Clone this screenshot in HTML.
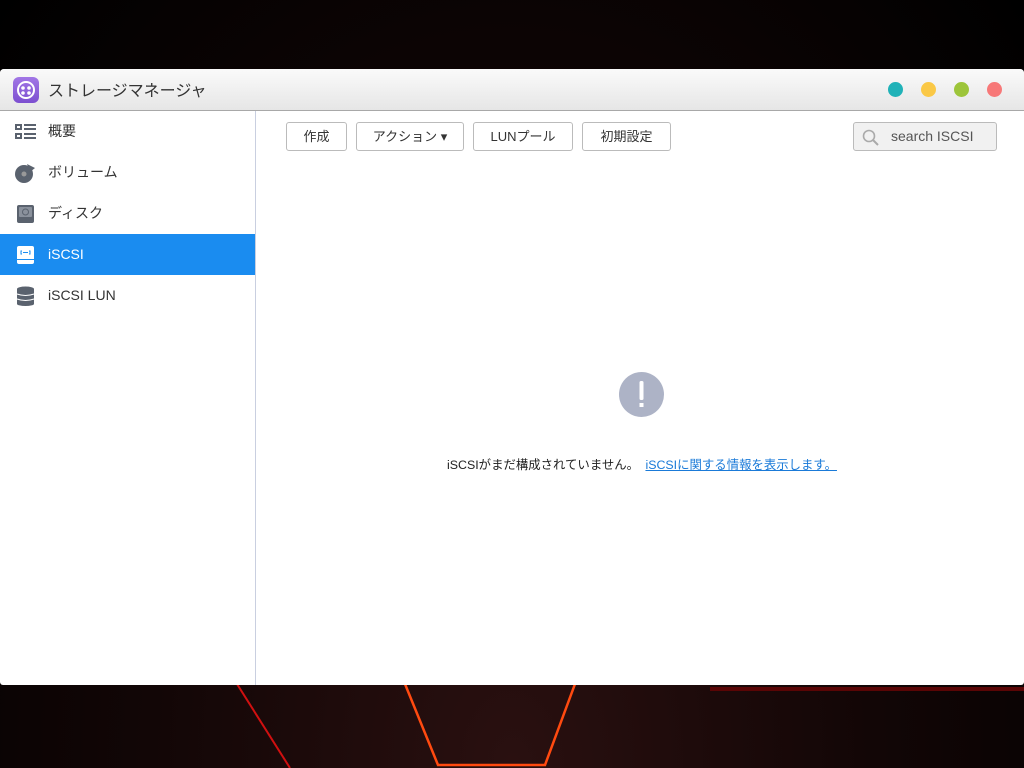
<!DOCTYPE html>
<html><head><meta charset="utf-8"><style>
*{margin:0;padding:0;box-sizing:border-box}
body{width:1024px;height:768px;overflow:hidden;background:radial-gradient(ellipse at 50% 100%,#2a1010 0%,#120606 50%,#000 100%);font-family:"Liberation Sans","Noto Sans CJK JP",sans-serif;position:relative}
.win{position:absolute;left:0;top:69px;width:1024px;height:616px;background:#fff;border-radius:4px 4px 3px 3px;overflow:hidden}
.title{height:42px;background:linear-gradient(#fafafa,#e6e6e6);border-bottom:1px solid #a8a8a8;position:relative}
.title .t{position:absolute;left:48px;top:8px;font-size:16px;color:#333}
.logo{position:absolute;left:13px;top:8px;width:26px;height:26px;border-radius:6px;background:linear-gradient(#a277e6,#7c4fd0)}
.dot{position:absolute;top:13px;width:15px;height:15px;border-radius:50%}
.side{position:absolute;left:0;top:42px;width:256px;bottom:0;border-right:1px solid #c9cfe0}
.item{height:41px;position:relative;font-size:14px;color:#333;line-height:41px;padding-left:48px}
.item.sel{background:#1a8cf0;color:#fff}
.ic{position:absolute;left:15px;top:11px;width:21px;height:20px}
.btn{position:absolute;top:122px;height:29px;border:1px solid #bbb;border-radius:3px;background:#fff;font-size:13px;color:#333;text-align:center;line-height:27px}
.search{position:absolute;left:853px;top:122px;width:144px;height:29px;border:1px solid #bbb;border-radius:3px;background:#f1f1f1;font-size:14px;color:#555;line-height:27px;padding-left:37px}
</style></head><body>
<svg style="position:absolute;left:0;top:684px" width="1024" height="84">
<line x1="237" y1="0" x2="290" y2="84" stroke="#d01010" stroke-width="2"/>
<polyline points="405,0 438,81 545,81 575,0" fill="none" stroke="#ff4a10" stroke-width="2.5"/>
<rect x="710" y="3" width="314" height="4" fill="#5a0505"/>
</svg>
<div class="win">
<div class="title">
<div class="logo"><svg width="26" height="26"><circle cx="13" cy="13" r="8" fill="none" stroke="#fff" stroke-width="2"/><circle cx="10" cy="11" r="1.8" fill="#fff"/><circle cx="16" cy="11" r="1.8" fill="#fff"/><circle cx="10" cy="16" r="1.8" fill="#fff"/><circle cx="16" cy="16" r="1.8" fill="#fff"/></svg></div>
<div class="t">ストレージマネージャ</div>
<div class="dot" style="left:888px;background:#20b2b8"></div>
<div class="dot" style="left:921px;background:#fac846"></div>
<div class="dot" style="left:954px;background:#9dc53a"></div>
<div class="dot" style="left:987px;background:#f77878"></div>
</div>
<div class="side">
<div class="item"><svg class="ic" viewBox="0 0 21 20"><rect x="0" y="2" width="7" height="6" fill="#5a626e"/><rect x="2" y="4" width="3" height="2" fill="#fff"/><rect x="0" y="11" width="7" height="6" fill="#5a626e"/><rect x="2" y="13" width="3" height="2" fill="#fff"/><rect x="9" y="2" width="12" height="2" fill="#5a626e"/><rect x="9" y="6" width="12" height="2" fill="#5a626e"/><rect x="9" y="11" width="12" height="2" fill="#5a626e"/><rect x="9" y="15" width="12" height="2" fill="#5a626e"/></svg>概要</div>
<div class="item"><svg class="ic" viewBox="0 0 21 20"><circle cx="9" cy="11" r="9" fill="#5a626e"/><circle cx="9" cy="11" r="2.5" fill="#999"/><path d="M12 1 L20 5 L15 9 Z" fill="#5a626e"/></svg>ボリューム</div>
<div class="item"><svg class="ic" viewBox="0 0 21 20"><rect x="2" y="1" width="17" height="18" rx="2" fill="#5a626e"/><rect x="4" y="3" width="13" height="10" rx="1" fill="#8a919c"/><circle cx="10.5" cy="8" r="3" fill="none" stroke="#5a626e" stroke-width="1"/></svg>ディスク</div>
<div class="item sel"><svg class="ic" viewBox="0 0 21 20"><rect x="2" y="1" width="17" height="18" rx="2" fill="#fff"/><rect x="2" y="14" width="17" height="1" fill="#1a8cf0"/><path d="M7 6h-1v3h1M14 6h1v3h-1M8 7.5h5" stroke="#1a8cf0" fill="none"/></svg>iSCSI</div>
<div class="item"><svg class="ic" viewBox="0 0 21 20"><ellipse cx="10.5" cy="3" rx="8.5" ry="2.5" fill="#5a626e"/><rect x="2" y="3" width="17" height="15" fill="#5a626e"/><ellipse cx="10.5" cy="18" rx="8.5" ry="2" fill="#5a626e"/><path d="M2 8q8.5 3 17 0M2 13q8.5 3 17 0" stroke="#fff" fill="none"/></svg>iSCSI LUN</div>
</div>
</div>
<div class="btn" style="left:286px;width:61px">作成</div>
<div class="btn" style="left:356px;width:108px">アクション ▾</div>
<div class="btn" style="left:473px;width:100px">LUNプール</div>
<div class="btn" style="left:582px;width:89px">初期設定</div>
<div class="search"><svg style="position:absolute;left:8px;top:6px" width="18" height="18"><circle cx="7" cy="7" r="5.5" fill="none" stroke="#aaa" stroke-width="1.6"/><line x1="11" y1="11" x2="16" y2="16" stroke="#aaa" stroke-width="2"/></svg>search ISCSI</div>
<svg style="position:absolute;left:619px;top:372px" width="45" height="45"><circle cx="22.5" cy="22.5" r="22.5" fill="#adb3c6"/><rect x="20.5" y="9" width="4" height="19" rx="1.5" fill="#fff"/><rect x="20.5" y="31" width="4" height="4" fill="#fff"/></svg>
<div style="position:absolute;left:447px;top:455px;font-size:12.4px;color:#222;white-space:nowrap">iSCSIがまだ構成されていません。 <span style="color:#1a7ad8;text-decoration:underline;margin-left:3px">iSCSIに関する情報を表示します。</span></div>
</body></html>
